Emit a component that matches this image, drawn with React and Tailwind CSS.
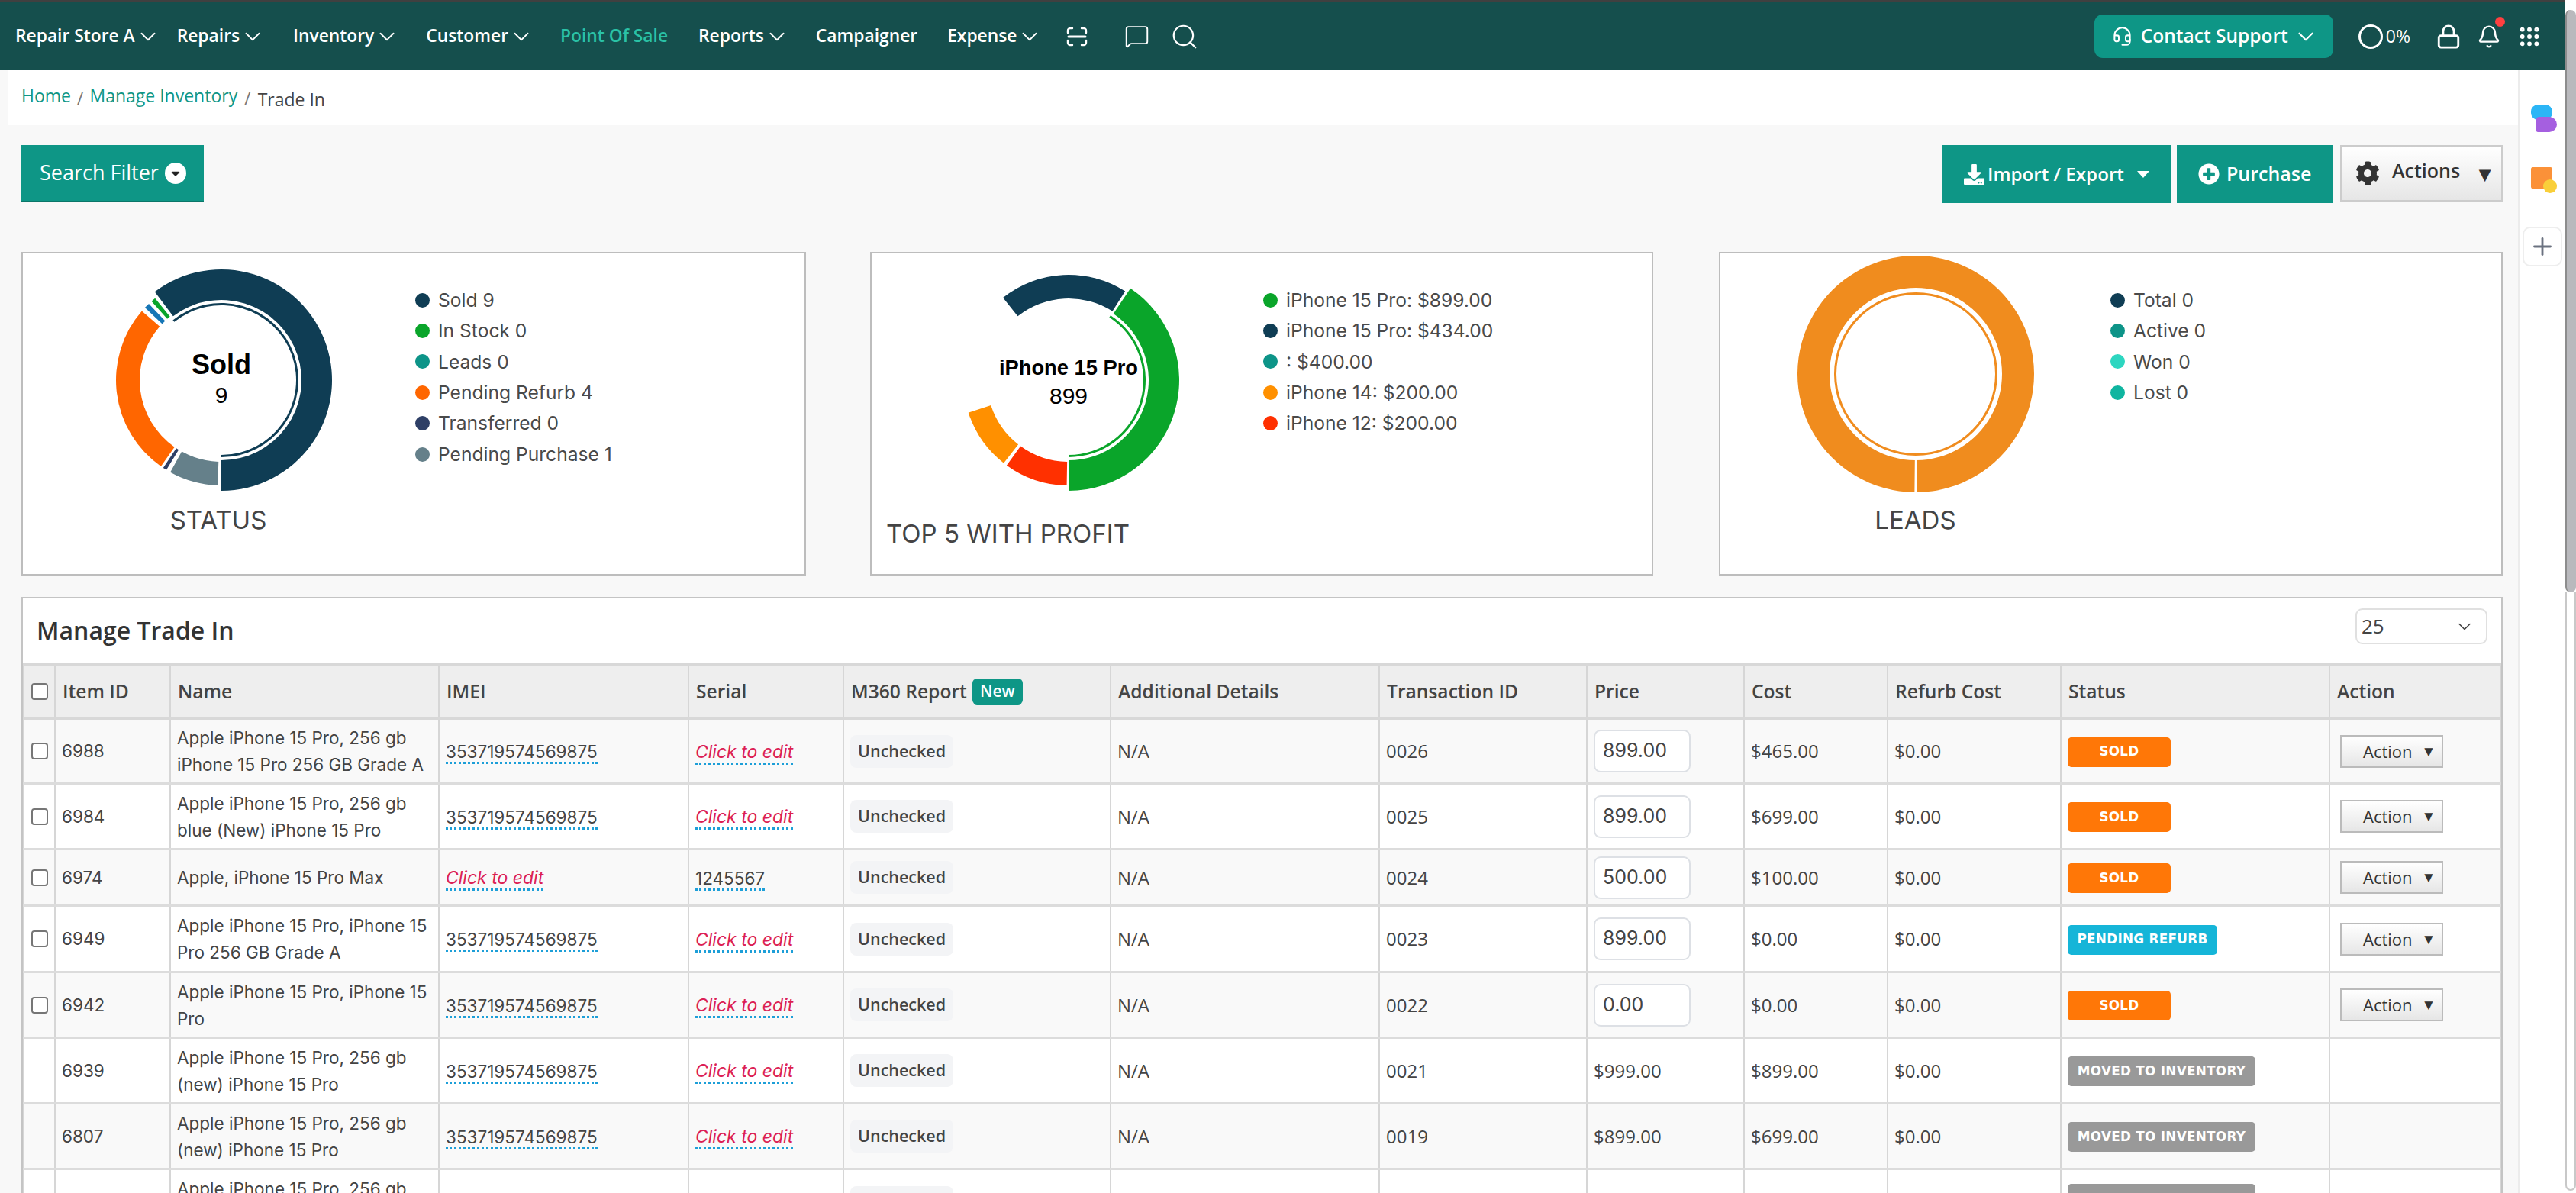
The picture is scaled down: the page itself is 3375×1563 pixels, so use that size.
import { ChevronDown, MessageSquare, Search, Lock, Bell, Grip, Headset, Plus } from 'lucide-react'
import { FaCaretDown, FaCog, FaDownload, FaPlusCircle } from 'react-icons/fa'

const imei = '353719574569875'

const rows = [
  { h: 'h-[85px]', id: '6988', name: ['Apple iPhone 15 Pro, 256 gb', 'iPhone 15 Pro 256 GB Grade A'], imei, serial: null, tx: '0026', price: '899.00', cost: '$465.00', status: 'SOLD', check: true },
  { h: 'h-[86px]', id: '6984', name: ['Apple iPhone 15 Pro, 256 gb', 'blue (New) iPhone 15 Pro'], imei, serial: null, tx: '0025', price: '899.00', cost: '$699.00', status: 'SOLD', check: true },
  { h: 'h-[74px]', id: '6974', name: ['Apple, iPhone 15 Pro Max'], imei: null, serial: '1245567', tx: '0024', price: '500.00', cost: '$100.00', status: 'SOLD', check: true },
  { h: 'h-[87px]', id: '6949', name: ['Apple iPhone 15 Pro, iPhone 15', 'Pro 256 GB Grade A'], imei, serial: null, tx: '0023', price: '899.00', cost: '$0.00', status: 'PENDING REFURB', check: true },
  { h: 'h-[86px]', id: '6942', name: ['Apple iPhone 15 Pro, iPhone 15', 'Pro'], imei, serial: null, tx: '0022', price: '0.00', cost: '$0.00', status: 'SOLD', check: true },
  { h: 'h-[86px]', id: '6939', name: ['Apple iPhone 15 Pro, 256 gb', '(new) iPhone 15 Pro'], imei, serial: null, tx: '0021', plainPrice: '$999.00', cost: '$899.00', status: 'MOVED TO INVENTORY' },
  { h: 'h-[86px]', id: '6807', name: ['Apple iPhone 15 Pro, 256 gb', '(new) iPhone 15 Pro'], imei, serial: null, tx: '0019', plainPrice: '$899.00', cost: '$699.00', status: 'MOVED TO INVENTORY' },
]

const statusStyles = {
  SOLD: 'bg-[#ff7707] w-[135px]',
  'PENDING REFURB': 'bg-[#15b5d8] w-[196px]',
  'MOVED TO INVENTORY': 'bg-[#999999] w-[246px]',
}

// clock degrees: 0 is 12 o'clock, growing clockwise
function ring(r0, r1, a0, a1, c = 158) {
  const pt = (r, a) => {
    const t = (a * Math.PI) / 180
    return `${(c + r * Math.sin(t)).toFixed(2)} ${(c - r * Math.cos(t)).toFixed(2)}`
  }
  const big = a1 - a0 > 180 ? 1 : 0
  return `M${pt(r1, a0)}A${r1} ${r1} 0 ${big} 1 ${pt(r1, a1)}L${pt(r0, a1)}A${r0} ${r0} 0 ${big} 0 ${pt(r0, a0)}Z`
}

function Donut({ segments, children }) {
  return (
    <div className="relative w-[316px] h-[316px] shrink-0">
      <svg width="316" height="316" viewBox="0 0 316 316">
        {segments.map(([r0, r1, a0, a1, fill], i) => (
          <path key={i} d={ring(r0, r1, a0, a1)} fill={fill} />
        ))}
      </svg>
      {children}
    </div>
  )
}

function Legend({ items, className }) {
  return (
    <ul className={`font-['Inter',sans-serif] text-[24.6px] text-[#4a4a4a] ${className}`}>
      {items.map(([color, label]) => (
        <li key={label} className="flex items-center gap-[11px] h-[40.4px]">
          <span className="w-[19px] h-[19px] rounded-full shrink-0" style={{ background: color }} />
          {label}
        </li>
      ))}
    </ul>
  )
}

function NavItem({ label, active, caret = true, className = '' }) {
  return (
    <div className={`flex items-center ${active ? 'text-[#2ac2a6]' : 'text-white'} ${className}`}>
      <span>{label}</span>
      {caret && <ChevronDown size={34} strokeWidth={1.3} />}
    </div>
  )
}

function Cell({ children, className = '' }) {
  return <td className={`border-x-2 border-[#d6d6d6] px-[8px] align-middle ${className}`}>{children}</td>
}

function Editable({ children, empty }) {
  const text = empty ? 'text-[23px] text-[#dc1f55] italic' : 'text-[22.5px] text-[#444]'
  return (
    <span className={`font-['Inter',sans-serif] border-b-[3px] border-dotted border-[#1d9fd8] ${text}`}>
      {children}
    </span>
  )
}

function Checkbox() {
  return <span className="block w-[22px] h-[22px] mx-auto rounded-[4px] border-2 border-[#767676] bg-white" />
}

export default function App() {
  return (
    <div className="flex w-[3375px] h-[1563px] overflow-hidden bg-[#f8f8f8] font-['Open_Sans',sans-serif]">
      <div className="w-[3361px] flex flex-col">
        {/* Top nav */}
        <header className="h-[92px] shrink-0 bg-[#154f4d] border-t-[3px] border-[#404040] flex items-center pl-[20px] pr-[31px] text-[22.8px] font-semibold">
          <div className="flex items-center gap-[34px]">
            <NavItem label="Repair Store A" className="mr-[-13px]" />
            <NavItem label="Repairs" className="mr-[2px]" />
            <NavItem label="Inventory" />
            <NavItem label="Customer" />
            <NavItem label="Point Of Sale" active caret={false} className="pr-[6px]" />
            <NavItem label="Reports" />
            <NavItem label="Campaigner" caret={false} className="pr-[5px]" />
            <NavItem label="Expense" />
          </div>
          <div className="flex items-center text-white ml-[31px]">
            <svg width="28" height="26" viewBox="0 0 28 26" fill="none" stroke="currentColor" strokeWidth="2.4" strokeLinecap="round">
              <path d="M2 8V5a3 3 0 0 1 3-3h3M20 2h3a3 3 0 0 1 3 3v3M26 18v3a3 3 0 0 1-3 3h-3M8 24H5a3 3 0 0 1-3-3v-3" />
              <path d="M3 13h22" strokeWidth="3" />
            </svg>
            <MessageSquare size={33} strokeWidth={1.4} className="ml-[48px]" />
            <Search size={38} strokeWidth={1.4} className="ml-[27px]" />
          </div>
          <div className="ml-auto flex items-center text-white">
            <button className="flex items-center h-[57px] w-[313px] pl-[23px] rounded-[11px] bg-[#0e9686] text-[24.5px]">
              <Headset size={27} strokeWidth={1.8} />
              <span className="ml-[11px]">Contact Support</span>
              <ChevronDown size={34} strokeWidth={1.5} className="ml-[6px]" />
            </button>
            <span className="ml-[33px] w-[32px] h-[32px] rounded-full border-[3px] border-white" />
            <span className="ml-[4px] text-[23px] font-normal">0%</span>
            <Lock size={34} strokeWidth={2} className="ml-[33px]" />
            <div className="relative ml-[20px]">
              <Bell size={32} strokeWidth={1.8} />
              <span className="absolute top-[-10px] right-[-5px] w-[13px] h-[13px] rounded-full bg-[#ff4040]" />
            </div>
            <Grip size={32} strokeWidth={2.4} className="ml-[21px]" />
          </div>
        </header>

        <div className="flex flex-1 min-h-0">
          <main className="w-[3299px] shrink-0 overflow-hidden">
            {/* Breadcrumb */}
            <nav className="ml-[11px] h-[72px] bg-white pl-[17px] pt-[16px] flex items-start text-[23px] text-[#0e9686]">
              <span>Home</span>
              <span className="mx-[8px] mt-[3px] text-[#777]">/</span>
              <span>Manage Inventory</span>
              <span className="mx-[9px] mt-[3px] text-[#777]">/</span>
              <span className="mt-[5px] text-[#444] text-[23px]">Trade In</span>
            </nav>

            <div className="pl-[28px] pr-[20px]">
              {/* Toolbar */}
              <div className="mt-[26px] flex items-start">
                <button className="flex items-center h-[75px] w-[239px] pl-[24px] bg-[#0e9686] border-b-2 border-[#0b7669] text-white text-[27px]">
                  Search Filter
                  <span className="ml-[8px] w-[28px] h-[28px] rounded-full bg-white text-[#222] flex items-center justify-center text-[18px]"><FaCaretDown /></span>
                </button>
                <button className="ml-auto flex items-center h-[76px] w-[299px] pl-[28px] bg-[#0e9686] text-white text-[24.2px] font-semibold">
                  <FaDownload size={27} />
                  <span className="ml-[4px]">Import / Export</span>
                  <span className="ml-[17px] w-0 h-0 border-x-[8px] border-t-[9px] border-x-transparent border-t-white" />
                </button>
                <button className="ml-[8px] flex items-center h-[76px] w-[204px] pl-[28px] bg-[#0e9686] text-white text-[25px] font-semibold">
                  <FaPlusCircle size={28} />
                  <span className="ml-[9px]">Purchase</span>
                </button>
                <button className="ml-[10px] flex items-center h-[74px] w-[213px] pl-[18px] bg-linear-to-b from-white to-[#e6e6e6] border-2 border-[#cccccc] text-[#333] text-[25px] font-semibold">
                  <FaCog size={32} />
                  <span className="ml-[16px] mb-[6px]">Actions</span>
                  <span className="ml-[19px] text-[27px] leading-none">▼</span>
                </button>
              </div>

              {/* Charts */}
              <div className="mt-[64px] flex">
                <section className="w-[1028px] h-[424px] bg-white border-2 border-[#bdbdbd] flex">
                  <div className="w-[520px] pt-[8px] flex flex-col items-center">
                    <Donut segments={[
                      [105, 145, 323, 540, '#0f3d54'],
                      [98, 101, 321, 540, '#0f3d54'],
                      [107, 138, 318.5, 321, '#0aa52a'],
                      [107, 138, 313.5, 316.5, '#1676b6'],
                      [107, 138, 215, 311, '#ff6600'],
                      [107, 138, 211.5, 213.5, '#2e3f66'],
                      [107, 138, 182, 209, '#65808a'],
                    ]}>
                      <div className="absolute inset-x-0 top-[118px] text-center font-['Liberation_Sans',sans-serif] text-black">
                        <div className="text-[36px] leading-[40px] font-bold">Sold</div>
                        <div className="text-[30px] leading-[40px]">9</div>
                      </div>
                    </Donut>
                    <div className="mt-[5px] mr-[8px] font-['Inter',sans-serif] text-[33px] leading-[40px] text-[#444]">STATUS</div>
                  </div>
                  <Legend className="mt-[41px] ml-[-6px]" items={[
                    ['#0f3d54', 'Sold 9'], ['#0aa52a', 'In Stock 0'], ['#0d9488', 'Leads 0'],
                    ['#ff6600', 'Pending Refurb 4'], ['#2e3f66', 'Transferred 0'], ['#65808a', 'Pending Purchase 1'],
                  ]} />
                </section>

                <section className="ml-[84px] w-[1026px] h-[424px] bg-white border-2 border-[#bdbdbd] flex">
                  <div className="w-[516px] pt-[8px] flex flex-col items-center">
                    <Donut segments={[
                      [105, 145, 34, 180, '#0aa52a'],
                      [98, 101, 33, 180, '#0aa52a'],
                      [107, 138, 181, 216, '#ff3000'],
                      [107, 138, 218, 252, '#ff9000'],
                      [107, 138, 321.5, 392.5, '#0f3d54'],
                    ]}>
                      <div className="absolute inset-x-0 top-[125px] text-center font-['Liberation_Sans',sans-serif] text-black whitespace-nowrap">
                        <div className="text-[27.3px] leading-[34px] font-bold">iPhone 15 Pro</div>
                        <div className="text-[30px] leading-[40px]">899</div>
                      </div>
                    </Donut>
                    <div className="mt-[23px] self-start ml-[19px] font-['Inter',sans-serif] text-[33px] leading-[40px] text-[#444]">TOP 5 WITH PROFIT</div>
                  </div>
                  <Legend className="mt-[41px] ml-[-3px]" items={[
                    ['#0aa52a', 'iPhone 15 Pro: $899.00'], ['#0f3d54', 'iPhone 15 Pro: $434.00'], ['#0d9488', ': $400.00'],
                    ['#ff9000', 'iPhone 14: $200.00'], ['#ff3000', 'iPhone 12: $200.00'],
                  ]} />
                </section>

                <section className="ml-[86px] w-[1027px] h-[424px] bg-white border-2 border-[#bdbdbd] flex">
                  <div className="w-[511px] flex flex-col items-center">
                    <Donut segments={[
                      [113, 155, 180.6, 539.4, '#f08c1e'],
                      [104, 107, 0, 179.99, '#f08c1e'],
                      [104, 107, 180, 359.99, '#f08c1e'],
                    ]} />
                    <div className="mt-[13px] font-['Inter',sans-serif] text-[33px] leading-[40px] text-[#444]">LEADS</div>
                  </div>
                  <Legend className="mt-[41px]" items={[
                    ['#0f3d54', 'Total 0'], ['#0d9488', 'Active 0'], ['#2dd6c0', 'Won 0'], ['#0fb5a0', 'Lost 0'],
                  ]} />
                </section>
              </div>

              {/* Table */}
              <section className="mt-[28px] bg-white border-x-2 border-t-2 border-[#c4c4c4]">
                <div className="h-[85px] flex items-center justify-between pl-[18px] pr-[18px]">
                  <h2 className="mb-[2px] text-[32px] font-semibold text-[#333]">Manage Trade In</h2>
                  <div className="mb-[12px] flex items-center justify-between w-[173px] h-[47px] pl-[6px] pr-[14px] rounded-[9px] border-2 border-[#e0e0e0] bg-white text-[26px] text-[#444]">
                    25
                    <ChevronDown size={28} strokeWidth={1.4} />
                  </div>
                </div>
                <table className="w-full table-fixed border-collapse">
                  <colgroup>
                    <col className="w-[41px]" /><col className="w-[151px]" /><col className="w-[352px]" /><col className="w-[327px]" />
                    <col className="w-[203px]" /><col className="w-[350px]" /><col className="w-[352px]" /><col className="w-[272px]" />
                    <col className="w-[206px]" /><col className="w-[188px]" /><col className="w-[227px]" /><col className="w-[352px]" />
                    <col />
                  </colgroup>
                  <thead>
                    <tr className="h-[71px] bg-[#eeeeee] border-y-[3px] border-[#d8d8d8] text-left text-[24.6px] font-semibold text-[#444]">
                      <th className="border-x-2 border-[#d6d6d6]"><Checkbox /></th>
                      {['Item ID', 'Name', 'IMEI', 'Serial'].map((h) => (
                        <th key={h} className="border-x-2 border-[#d6d6d6] px-[9px] font-semibold">{h}</th>
                      ))}
                      <th className="border-x-2 border-[#d6d6d6] px-[9px] font-semibold">
                        <span className="flex items-center gap-[7px] whitespace-nowrap">
                          M360 Report
                          <span className="inline-flex items-center justify-center w-[66px] h-[34px] rounded-[6px] bg-[#0e9686] text-white text-[21px]">New</span>
                        </span>
                      </th>
                      {['Additional Details', 'Transaction ID', 'Price', 'Cost', 'Refurb Cost', 'Status', 'Action'].map((h) => (
                        <th key={h} className="border-x-2 border-[#d6d6d6] px-[9px] font-semibold">{h}</th>
                      ))}
                    </tr>
                  </thead>
                  <tbody className="text-[24px] text-[#444]">
                    {rows.map((r, i) => (
                      <tr key={r.id} className={`${r.h} border-b-[3px] border-[#dcdcdc] ${i % 2 === 0 ? 'bg-[#f9f9f9]' : 'bg-white'}`}>
                        <Cell className="px-0">{r.check && <Checkbox />}</Cell>
                        <Cell className="font-['Inter',sans-serif] text-[22.5px]">{r.id}</Cell>
                        <Cell className="font-['Inter',sans-serif] text-[22.5px] leading-[35px] whitespace-nowrap">
                          {r.name.map((line) => <div key={line}>{line}</div>)}
                        </Cell>
                        <Cell>{r.imei ? <Editable>{r.imei}</Editable> : <Editable empty>Click to edit</Editable>}</Cell>
                        <Cell>{r.serial ? <Editable>{r.serial}</Editable> : <Editable empty>Click to edit</Editable>}</Cell>
                        <Cell>
                          <span className="inline-flex items-center px-[10px] h-[43px] rounded-[8px] bg-[#f3f4f6] text-[21.5px] font-semibold text-[#444]">Unchecked</span>
                        </Cell>
                        <Cell>N/A</Cell>
                        <Cell>{r.tx}</Cell>
                        <Cell>
                          {r.price
                            ? <span className="flex items-center w-[127px] h-[56px] pl-[10px] rounded-[9px] border-2 border-[#dde0e5] bg-white font-['Inter',sans-serif] text-[25px]">{r.price}</span>
                            : r.plainPrice}
                        </Cell>
                        <Cell>{r.cost}</Cell>
                        <Cell>$0.00</Cell>
                        <Cell>
                          <span className={`inline-flex items-center justify-center h-[39px] rounded-[5px] text-white text-[16.8px] font-bold tracking-[0.3px] font-['DejaVu_Sans',sans-serif] ${statusStyles[r.status]}`}>{r.status}</span>
                        </Cell>
                        <Cell className="pl-[13px]">
                          {r.check && (
                            <button className="flex items-center w-[135px] h-[43px] pl-[28px] border-2 border-[#bbbbbb] bg-linear-to-b from-white to-[#e6e6e6] text-[22px] text-[#333]">
                              Action
                              <span className="ml-[12px] text-[19px] leading-none">▼</span>
                            </button>
                          )}
                        </Cell>
                      </tr>
                    ))}
                    {/* last row, cut off by the window */}
                    <tr className="h-[86px] bg-white">
                      <Cell />
                      <Cell />
                      <Cell className="font-['Inter',sans-serif] text-[22.5px] leading-[35px] whitespace-nowrap">
                        <div>Apple iPhone 15 Pro, 256 gb</div>
                        <div>(new) iPhone 15 Pro</div>
                      </Cell>
                      <Cell /><Cell />
                      <Cell>
                        <span className="inline-flex items-center px-[10px] h-[43px] rounded-[8px] bg-[#f3f4f6] text-[21.5px] font-semibold text-[#444]">Unchecked</span>
                      </Cell>
                      <Cell /><Cell /><Cell /><Cell /><Cell />
                      <Cell>
                        <span className="inline-flex items-center justify-center w-[246px] h-[39px] rounded-[5px] bg-[#999999]" />
                      </Cell>
                      <Cell />
                    </tr>
                  </tbody>
                </table>
              </section>
            </div>
          </main>

          {/* Browser side rail */}
          <aside className="flex-1 border-l-2 border-[#ececec] bg-white flex flex-col items-center pt-[45px]">
            <svg width="34" height="36" viewBox="0 0 34 36" className="ml-[3px]">
              <rect x="0" y="0" width="28" height="20" rx="9" fill="#2bb5f6" />
              <path d="M7 20a4 4 0 0 1 4-4h13a10 10 0 0 1 0 20H9a2 2 0 0 1-2-2Z" fill="#a55fe0" />
            </svg>
            <svg width="34" height="37" viewBox="0 0 34 37" className="mt-[46px] ml-[3px]">
              <rect x="0" y="0" width="28" height="28" rx="2.5" fill="#fb9138" />
              <circle cx="25" cy="25" r="9" fill="#f9cf3a" />
            </svg>
            <div className="mt-[41px] w-[52px] h-[52px] rounded-[10px] border-2 border-[#eeeeee] bg-white flex items-center justify-center text-[#6b7280]">
              <Plus size={36} strokeWidth={1.9} />
            </div>
          </aside>
        </div>
      </div>

      {/* Scrollbar */}
      <div className="w-[14px] shrink-0 flex flex-col bg-white pt-[13px] pb-[3px]">
        <div className="h-[763px] rounded-b-full rounded-t-full bg-[#b9b9bd] border-l-2 border-[#8d8d8d]" />
        <div className="flex-1 rounded-b-full border-x-2 border-b-2 border-[#c8c8c8]" />
      </div>
    </div>
  )
}
